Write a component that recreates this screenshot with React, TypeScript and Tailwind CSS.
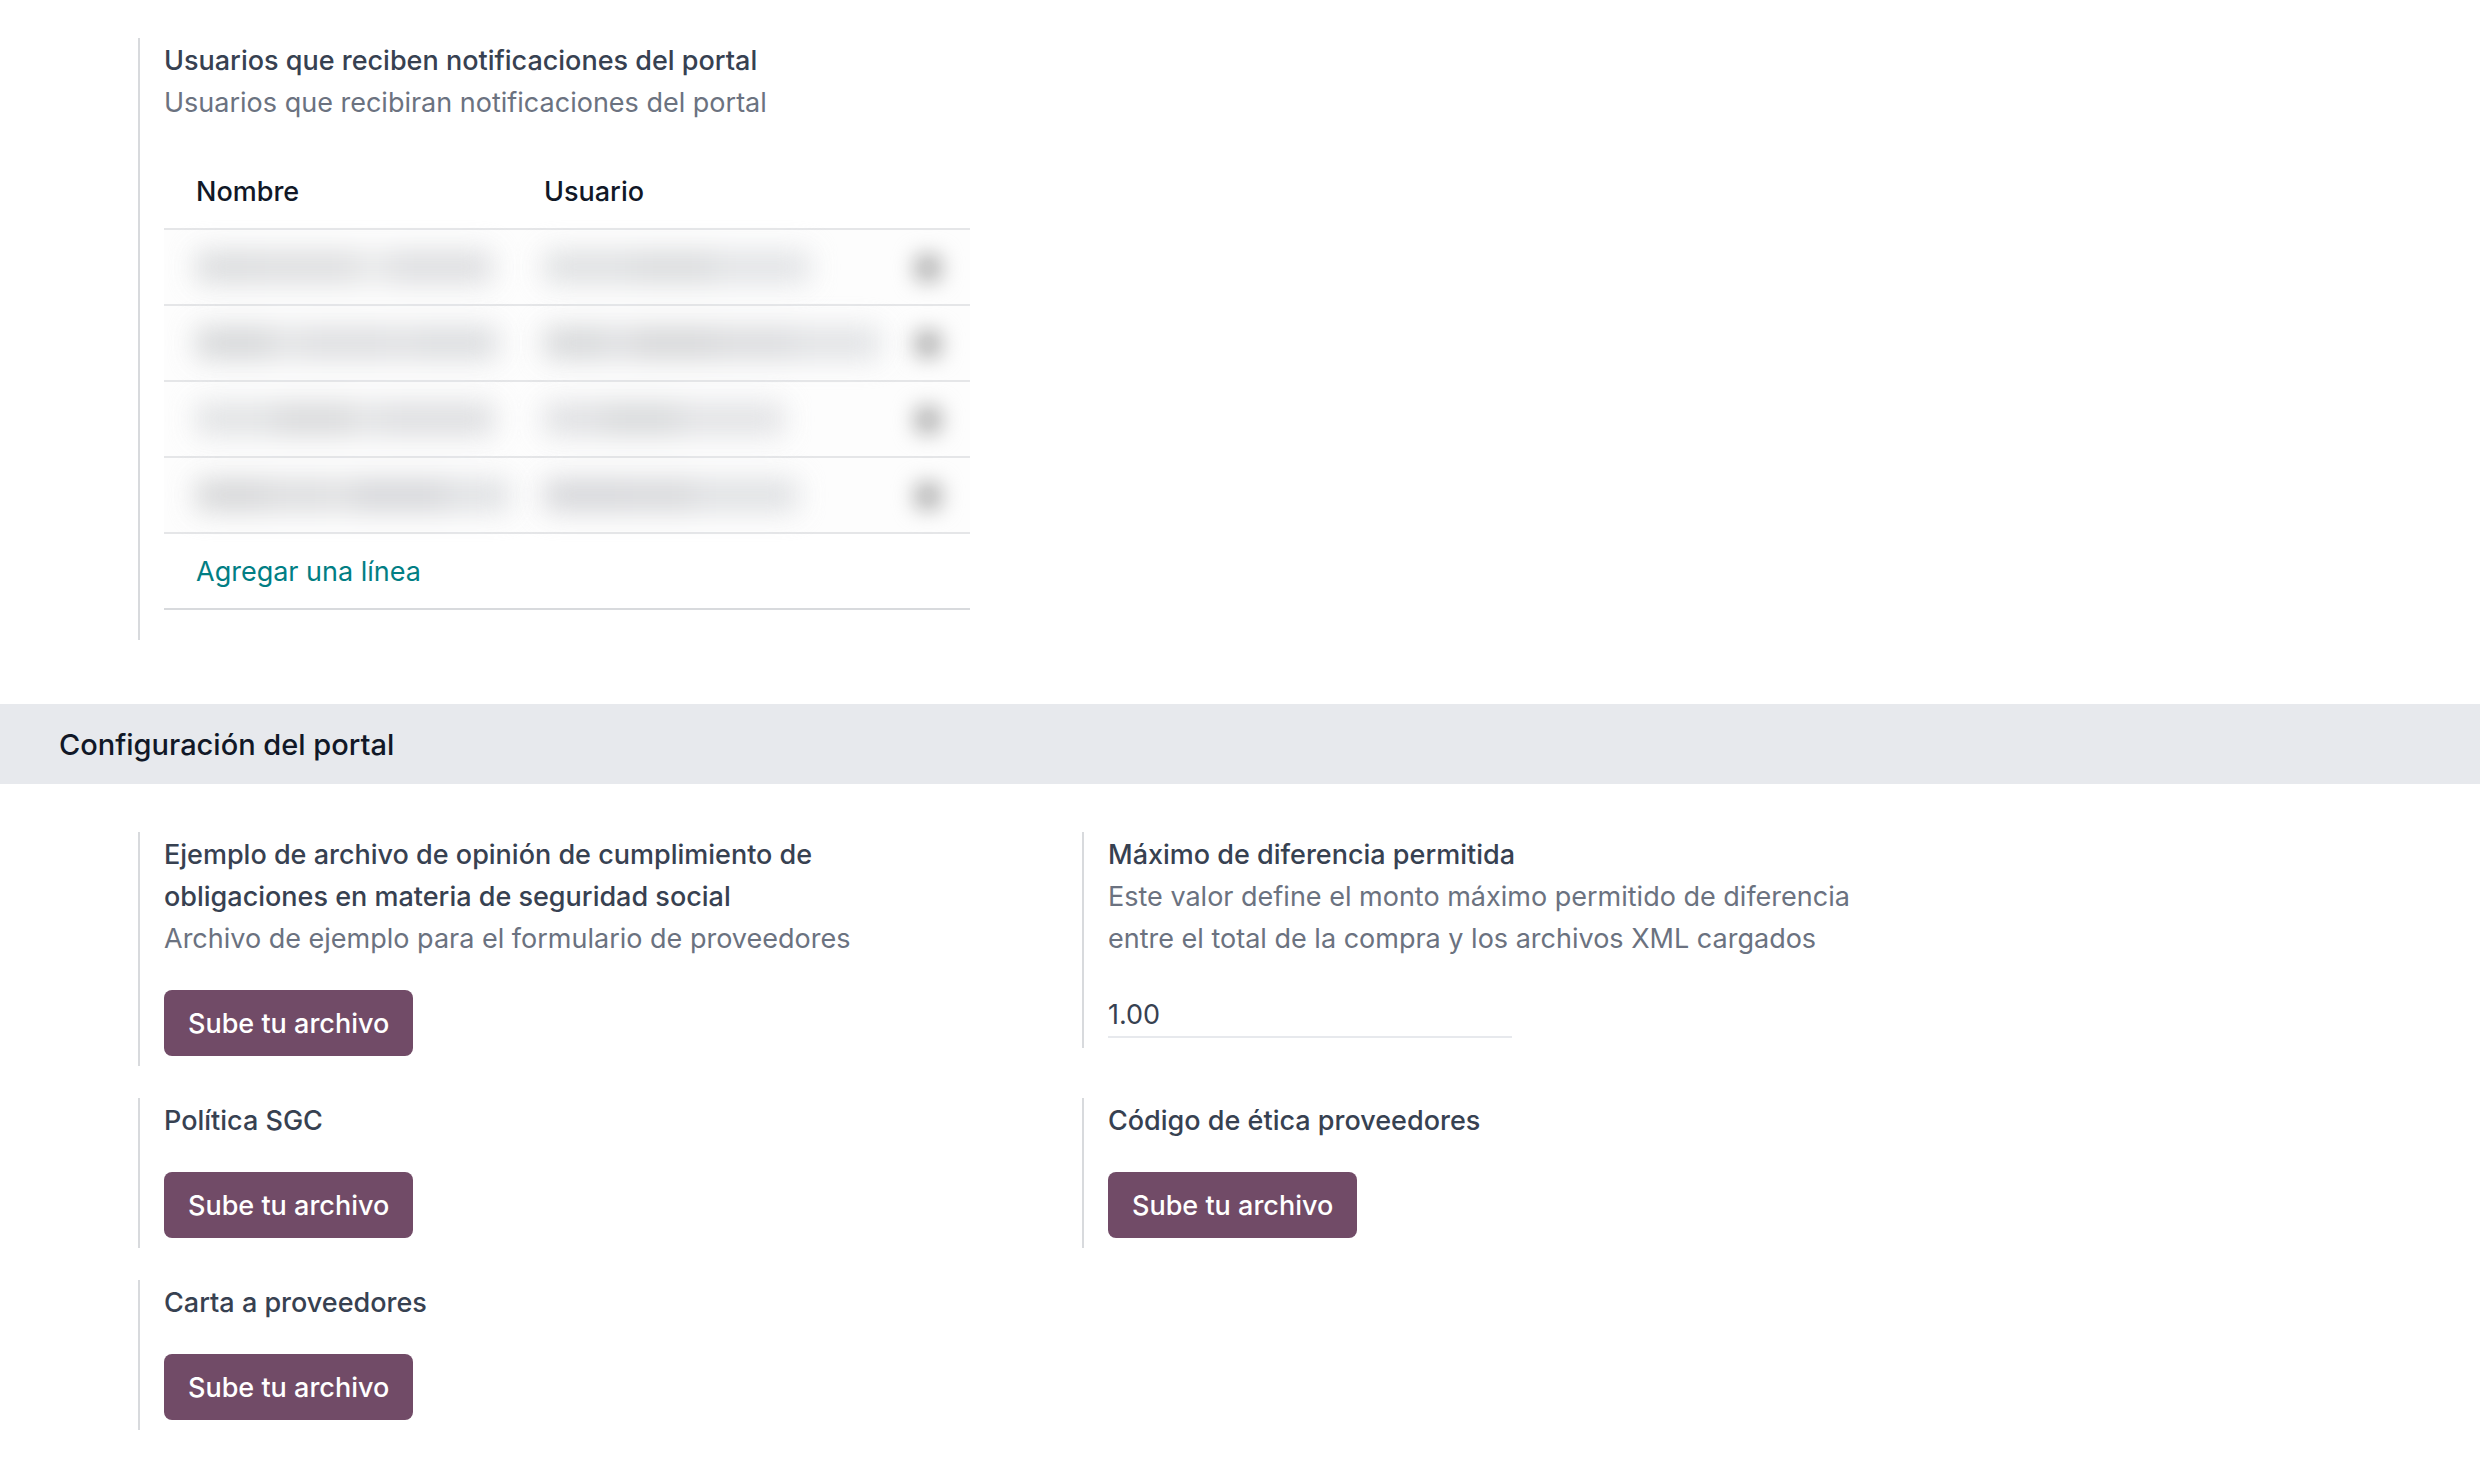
import type { ReactNode } from 'react'

// Each hidden value is a run of [width, tone] segments
type Segment = [number, string]

const rows: { id: number; name: Segment[]; user: Segment[] }[] = [
  {
    id: 1,
    name: [[60, '#d3d5d7'], [100, '#d6d7d9'], [34, '#e4e5e6'], [102, '#d6d7da']],
    user: [[90, '#d8dadc'], [80, '#d2d4d6'], [96, '#dcdee1']],
  },
  {
    id: 2,
    name: [[76, '#cdcfd1'], [30, '#dddee0'], [90, '#d6d7da'], [20, '#dbdcde'], [86, '#d4d6d9']],
    user: [[60, '#ced0d2'], [30, '#d8d9dc'], [80, '#cdced0'], [80, '#d3d4d7'], [86, '#dbdde0']],
  },
  {
    id: 3,
    name: [[80, '#dbdddf'], [76, '#d0d1d3'], [30, '#dddee0'], [112, '#d6d7da']],
    user: [[60, '#d9dadd'], [76, '#cfd1d3'], [104, '#dcdde0']],
  },
  {
    id: 4,
    name: [[70, '#cdced0'], [70, '#d5d6d8'], [14, '#dedfe0'], [96, '#cdced2'], [64, '#d9dbde']],
    user: [[80, '#cdced2'], [70, '#cfd0d3'], [104, '#d9dbde']],
  },
]

function HiddenValue({ segments }: { segments: Segment[] }) {
  return (
    <div className="flex opacity-85 blur-[14px]">
      {segments.map(([width, tone], i) => (
        <span key={i} className="h-8 shrink-0" style={{ width, backgroundColor: tone }} />
      ))}
    </div>
  )
}

function UploadButton() {
  return (
    <button className="mt-[30px] block h-[66px] rounded-lg bg-[#714b67] px-6 pt-0.5 text-[27px] font-medium text-white hover:bg-[#624159]">
      Sube tu archivo
    </button>
  )
}

interface SettingProps {
  title: string
  help?: string
  htmlFor?: string
  children: ReactNode
}

function Setting({ title, help, htmlFor, children }: SettingProps) {
  return (
    <div className="self-start border-l-2 border-[#d8dadd] pt-0.5 pb-[10px] pl-6">
      <div className="max-w-[806px]">
        {htmlFor ? (
          <label htmlFor={htmlFor} className="block font-medium">
            {title}
          </label>
        ) : (
          <h3 className="font-medium">{title}</h3>
        )}
        {help ? <p className="text-[#6b7280]">{help}</p> : null}
        {children}
      </div>
    </div>
  )
}

function UsersTable() {
  return (
    <table className="mt-[29px] mb-5 w-full table-fixed border-collapse">
      <thead>
        <tr className="h-[76px] border-b-2 border-[#e5e6e8] text-left text-[#111827]">
          <th className="w-[380px] pt-0.5 pl-8 font-medium">Nombre</th>
          <th className="pt-0.5 font-medium">Usuario</th>
          <th className="w-[84px]" />
        </tr>
      </thead>
      <tbody>
        {rows.map((row) => (
          <tr key={row.id} className="h-[76px] border-b-2 border-[#e5e6e8] bg-[#fdfdfd]">
            <td className="pl-8">
              <HiddenValue segments={row.name} />
            </td>
            <td>
              <HiddenValue segments={row.user} />
            </td>
            <td className="pt-0.5">
              <button
                aria-label="Eliminar"
                className="mx-auto block size-7 rounded-md bg-[#b8b8b8] blur-[10px]"
              />
            </td>
          </tr>
        ))}
        <tr className="h-[76px] border-b-2 border-[#d8dadd]">
          <td colSpan={3} className="pt-0.5 pl-8">
            <a href="#" className="text-[#017e84]">
              Agregar una línea
            </a>
          </td>
        </tr>
      </tbody>
    </table>
  )
}

export default function App() {
  return (
    <div className="min-h-screen bg-white font-['Inter',sans-serif] text-[27px] leading-[42px] text-[#374151]">
      <section className="grid max-w-[2026px] grid-cols-2 pt-[38px] pb-16 pl-[138px]">
        <Setting
          title="Usuarios que reciben notificaciones del portal"
          help="Usuarios que recibiran notificaciones del portal"
        >
          <UsersTable />
        </Setting>
      </section>

      <h2 className="bg-[#e7e9ed] px-[59px] pt-5 pb-[18px] text-[29px] font-medium text-[#111827]">
        Configuración del portal
      </h2>

      <section className="grid max-w-[2026px] grid-cols-2 gap-y-8 py-12 pl-[138px]">
        <Setting
          title="Ejemplo de archivo de opinión de cumplimiento de obligaciones en materia de seguridad social"
          help="Archivo de ejemplo para el formulario de proveedores"
        >
          <UploadButton />
        </Setting>
        <Setting
          title="Máximo de diferencia permitida"
          help="Este valor define el monto máximo permitido de diferencia entre el total de la compra y los archivos XML cargados"
          htmlFor="max-diferencia"
        >
          <input
            id="max-diferencia"
            type="text"
            defaultValue="1.00"
            className="mt-[30px] block h-12 w-[404px] border-b-2 border-[#e7e9ed] pt-0.5 outline-none"
          />
        </Setting>
        <Setting title="Política SGC">
          <UploadButton />
        </Setting>
        <Setting title="Código de ética proveedores">
          <UploadButton />
        </Setting>
        <Setting title="Carta a proveedores">
          <UploadButton />
        </Setting>
      </section>
    </div>
  )
}
